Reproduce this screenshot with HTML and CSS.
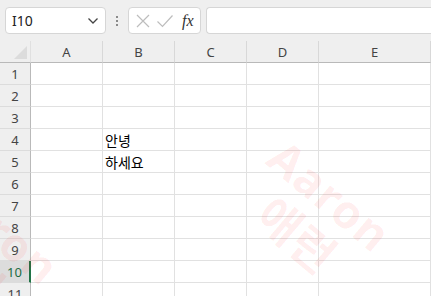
FILE: index.html
```html
<!DOCTYPE html>
<html lang="ko">
<head>
<meta charset="utf-8">
<link rel="stylesheet" href="styles.css">
</head>
<body>
<div class="app">
  <div class="toolbar">
    <div class="namebox">
      <span class="ref">I10</span>
      <svg class="chev" width="12" height="8" viewBox="0 0 12 8"><path d="M1.5 1.5 L6 6 L10.5 1.5" fill="none" stroke="#444" stroke-width="1.3"/></svg>
    </div>
    <div class="dots"><i></i><i></i><i></i></div>
    <div class="fbtns">
      <svg width="16" height="16" viewBox="0 0 16 16"><path d="M2 2 L14 14 M14 2 L2 14" stroke="#bdbdbd" stroke-width="1.2" fill="none"/></svg>
      <svg width="18" height="16" viewBox="0 0 18 16"><path d="M1.5 8.5 L6.5 13.5 L16.5 2.5" stroke="#bdbdbd" stroke-width="1.2" fill="none"/></svg>
      <span class="fx">fx</span>
    </div>
    <div class="finput"></div>
  </div>
  <div class="sheet">
    <div class="grid">
      <div class="corner"><span class="tri"></span></div>
      <div class="ch">A</div><div class="ch">B</div><div class="ch">C</div><div class="ch">D</div><div class="ch">E</div>

      <div class="rh">1</div><div class="c"></div><div class="c"></div><div class="c"></div><div class="c"></div><div class="c"></div>
      <div class="rh">2</div><div class="c"></div><div class="c"></div><div class="c"></div><div class="c"></div><div class="c"></div>
      <div class="rh">3</div><div class="c"></div><div class="c"></div><div class="c"></div><div class="c"></div><div class="c"></div>
      <div class="rh">4</div><div class="c"></div><div class="c txt">안녕</div><div class="c"></div><div class="c"></div><div class="c"></div>
      <div class="rh">5</div><div class="c"></div><div class="c txt">하세요</div><div class="c"></div><div class="c"></div><div class="c"></div>
      <div class="rh">6</div><div class="c"></div><div class="c"></div><div class="c"></div><div class="c"></div><div class="c"></div>
      <div class="rh">7</div><div class="c"></div><div class="c"></div><div class="c"></div><div class="c"></div><div class="c"></div>
      <div class="rh">8</div><div class="c"></div><div class="c"></div><div class="c"></div><div class="c"></div><div class="c"></div>
      <div class="rh">9</div><div class="c"></div><div class="c"></div><div class="c"></div><div class="c"></div><div class="c"></div>
      <div class="rh sel">10</div><div class="c"></div><div class="c"></div><div class="c"></div><div class="c"></div><div class="c"></div>
      <div class="rh">11</div><div class="c"></div><div class="c"></div><div class="c"></div><div class="c"></div><div class="c"></div>
    </div>
    <div class="wm wm1"><span>Aaron</span><span>애런</span></div>
    <div class="wm wm2"><span>Aaron</span><span>애런</span></div>
  </div>
</div>
</body>
</html>
```
FILE: styles.css
```css
html, body { margin: 0; padding: 0; }
body {
  width: 431px; height: 296px; overflow: hidden;
  background: #fff;
  font-family: "Noto Sans", "Open Sans", sans-serif;
}
.app { width: 431px; height: 296px; overflow: hidden; position: relative; }
.toolbar {
  height: 41px;
  background: #efefef;
  display: flex;
  align-items: flex-start;
  padding: 7px 0 0 5px;
  box-sizing: border-box;
}
.namebox {
  width: 101px; height: 27px;
  box-sizing: border-box;
  background: #fff;
  border: 1px solid #d6d6d6;
  border-radius: 4px;
  display: flex; align-items: center; justify-content: space-between;
  padding: 0 6px 0 6px;
}
.ref { font-size: 14px; color: #222; }
.chev { margin-top: 1px; }
.dots {
  width: 22px; height: 27px;
  display: flex; flex-direction: column; align-items: center; justify-content: center; gap: 2px;
}
.dots i { width: 2px; height: 2px; background: #8a8a8a; display: block; }
.fbtns {
  width: 73px; height: 27px; box-sizing: border-box;
  background: #fff;
  border: 1px solid #d6d6d6; border-radius: 4px;
  display: flex; align-items: center; padding: 0 0 0 6px; gap: 5px;
}
.fx {
  font-family: "Liberation Serif", "DejaVu Serif", serif;
  font-style: italic; font-size: 16px; color: #333; margin-left: 3px;
}
.finput {
  flex: 1; height: 27px; margin-left: 5px;
  background: #fff; border: 1px solid #d6d6d6; border-right: none;
  border-radius: 4px 0 0 4px; box-sizing: border-box;
}
.sheet { position: relative; height: 255px; overflow: hidden; }
.grid {
  display: grid;
  grid-template-columns: 31px 72px 72px 72px 72px 1fr;
  grid-auto-rows: 22px;
}
.corner, .ch {
  background: #efefef;
  border-bottom: 1px solid #b9b9b9;
  box-sizing: border-box;
}
.corner { border-right: 1px solid #e0e0e0; position: relative; }
.tri {
  position: absolute; right: 3px; bottom: 3px;
  width: 0; height: 0;
  border-style: solid; border-width: 0 0 13px 13px;
  border-color: transparent transparent #dcdcdc transparent;
}
.ch {
  border-right: 1px solid #d8d8d8;
  font-size: 13px; color: #444;
  display: flex; align-items: center; justify-content: center;
  padding-top: 1px;
}
.rh {
  background: #efefef;
  border-right: 1px solid #b9b9b9;
  border-bottom: 1px solid #dcdcdc;
  box-sizing: border-box;
  font-size: 13px; color: #444;
  display: flex; align-items: center; justify-content: center;
}
.rh.sel {
  background: #dcdcdc;
  color: #1e6b42;
  border-right: 2px solid #217346;
}
.c {
  border-right: 1px solid #e1e1e1;
  border-bottom: 1px solid #e1e1e1;
  box-sizing: border-box;
}
.txt {
  font-family: "Noto Sans CJK KR", sans-serif;
  font-size: 14px; color: #000;
  padding-left: 2px;
  display: flex; align-items: center;
  white-space: nowrap;
}
.wm {
  position: absolute;
  pointer-events: none;
  display: flex; flex-direction: column; align-items: center;
  font-family: "Noto Sans", "Noto Sans CJK KR", sans-serif;
  font-weight: 700;
  font-size: 46px;
  letter-spacing: 1px;
  line-height: 50px;
  color: rgba(255, 0, 0, 0.075);
  transform-origin: 0 0;
  transform: rotate(40deg);
  white-space: nowrap;
}
.wm span:last-child { font-family: "Noto Sans CJK KR", sans-serif; font-size: 46px; }
.wm1 { left: 292px; top: 89px; }
.wm2 { left: -40px; top: 122px; }
```
